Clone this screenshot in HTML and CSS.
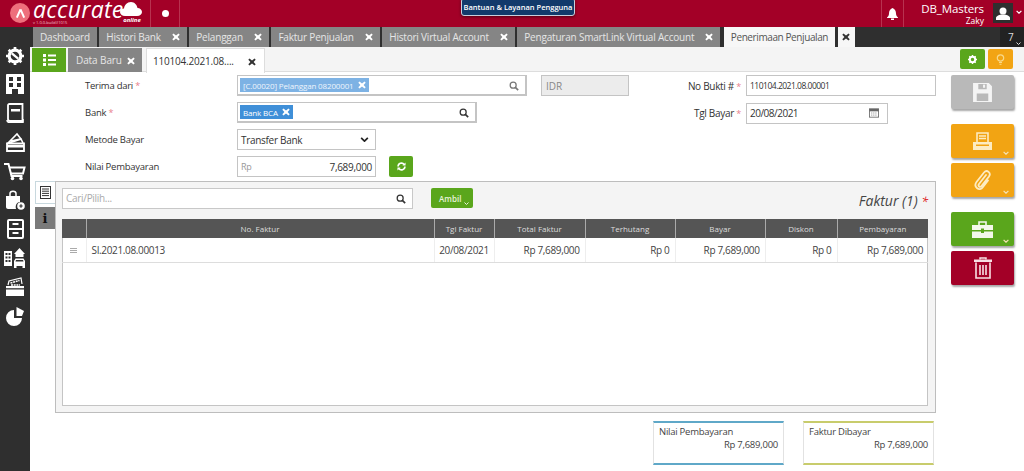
FILE: index.html
```html
<!DOCTYPE html>
<html lang="en">
<head>
    <meta charset="UTF-8">
    <meta name="viewport" content="width=device-width, initial-scale=1.0">
    <title>Penerimaan Penjualan</title>
    <link rel="stylesheet" href="styles.css">
</head>
<body>
    <svg class="sprites" width="0" height="0">
        <symbol id="i-close" viewBox="0 0 10 10"><path d="M1.800 0.600 5 3.200 8.200 0.600 9.600 2.200 7 5 9.600 7.800 8.200 9.400 5 6.800 1.800 9.400 0.400 7.800 3 5 0.400 2.200Z"/></symbol>
        <symbol id="i-search" viewBox="0 0 12 12"><circle cx="5" cy="5" r="3.600" fill="none" stroke="currentColor" stroke-width="1.500"/><path d="M7.600 7.600 11 11" stroke="currentColor" stroke-width="2"/></symbol>
        <symbol id="i-chev" viewBox="0 0 10 6"><path d="M1 1 5 5 9 1" fill="none" stroke="currentColor" stroke-width="2"/></symbol>
    </svg>

    <header class="topbar">
        <div class="brand">
            <span class="brand-badge">
                <svg width="11" height="11" viewBox="0 0 12 12"><path d="M6 1.500 2 10.500M6 1.500l4 9" fill="none" stroke="#fff" stroke-width="2.200"/></svg>
            </span>
            <div class="brand-text">
                <span class="brand-name">accurate</span>
                <span class="brand-version">v 1.0.0-build#1015</span>
            </div>
            <div class="brand-cloud">
                <svg width="22" height="14" viewBox="0 0 22 14"><path d="M5 14C2 14 0 12 0 10 0 8 1.500 6.500 4 6.500 4.500 3 7 0 11 0 14.500 0 17 3 17.500 6 20 6 22 8 22 10 22 12 20 14 17 14Z" fill="#fff"/></svg>
                <span class="brand-online">online</span>
            </div>
        </div>
        <div class="dot-cell"><span class="dot"></span></div>
        <div class="help-box">Bantuan &amp; Layanan Pengguna</div>
        <div class="bell-cell">
            <svg width="11" height="12" viewBox="0 0 11 12" fill="#fff"><path d="M5.500 0C3 1 2 3 2 5.500 2 7.500 1 8.500 0 9.500V10H11V9.500C10 8.500 9 7.500 9 5.500 9 3 8 1 5.500 0Z"/><rect x="4" y="10.500" width="3" height="1.500"/></svg>
        </div>
        <div class="user">
            <div class="user-name">DB_Masters</div>
            <div class="user-sub">Zaky</div>
        </div>
        <div class="avatar">
            <svg width="14" height="13" viewBox="0 0 14 13" fill="#fff"><circle cx="7" cy="4" r="3.500"/><path d="M0 13V11C0 9 3 8 5 7.500H9C11 8 14 9 14 11V13Z"/></svg>
        </div>
        <svg class="user-chev"><use href="#i-chev"/></svg>
    </header>

    <nav class="tabbar">
        <a class="tab">Dashboard</a>
        <a class="tab">Histori Bank <svg class="x"><use href="#i-close"/></svg></a>
        <a class="tab">Pelanggan <svg class="x"><use href="#i-close"/></svg></a>
        <a class="tab">Faktur Penjualan <svg class="x"><use href="#i-close"/></svg></a>
        <a class="tab">Histori Virtual Account <svg class="x"><use href="#i-close"/></svg></a>
        <a class="tab">Pengaturan SmartLink Virtual Account <svg class="x"><use href="#i-close"/></svg></a>
        <a class="tab tab-active">Penerimaan Penjualan</a>
        <a class="tab tab-closer"><svg class="x"><use href="#i-close"/></svg></a>
        <div class="tab-count">7 <svg class="count-chev"><use href="#i-chev"/></svg></div>
    </nav>

    <div class="workspace">
        <aside class="sidebar">
            <!-- gear with wrench -->
            <svg width="18" height="18" viewBox="0 0 20 20"><circle cx="10" cy="10" r="6.500" fill="none" stroke="#fff" stroke-width="3.500"/><path d="M10 0V4M10 16V20M0 10H4M16 10H20M3 3 5.500 5.500M14.500 14.500 17 17M17 3 14.500 5.500M5.500 14.500 3 17" stroke="#fff" stroke-width="3"/><path d="M6.500 7 13.500 13" stroke="#fff" stroke-width="2.500"/></svg>
            <!-- building -->
            <svg width="18" height="20" viewBox="0 0 18 20"><path fill-rule="evenodd" fill="#fff" d="M0 1C0 .5.500 0 1 0H17C17.500 0 18 .5 18 1V20H12V15H6V20H0ZM3 3V7H7V3ZM11 3V7H15V3ZM3 9V13H7V9ZM11 9V13H15V9Z"/></svg>
            <!-- book -->
            <svg width="18" height="20" viewBox="0 0 18 20"><path fill="none" stroke="#fff" stroke-width="1.800" d="M2 2.500C2 1.500 2.500 1 3.500 1H16.500V18H4C2.800 18 2 17.300 2 16Z"/><rect x="5" y="6" width="9" height="2.500" fill="#fff"/><path d="M1 17C1 19 2.500 19.500 4 19.500H17V16" fill="none" stroke="#fff" stroke-width="1.500"/></svg>
            <!-- wallet -->
            <svg width="19" height="20" viewBox="0 0 19 20"><path fill="none" stroke="#fff" stroke-width="1.600" d="M1 12 11 2 15 7 3 11M5 9 15 7 17 11"/><path fill="none" stroke="#fff" stroke-width="1.800" d="M1 11.500H18V19H1Z"/><rect x="1" y="13" width="17" height="2.500" fill="#fff"/></svg>
            <!-- cart -->
            <svg width="22" height="20" viewBox="0 0 22 20"><path fill="none" stroke="#fff" stroke-width="2" d="M0 3H4.500L7.500 15H18.500"/><path fill="none" stroke="#fff" stroke-width="2" d="M5.500 6.500H20.500L19 12.500H7"/><circle cx="8.500" cy="17.500" r="1.800" fill="#fff"/><circle cx="17" cy="17.500" r="1.800" fill="#fff"/></svg>
            <!-- bag with plus -->
            <svg width="20" height="20" viewBox="0 0 20 20"><path fill="none" stroke="#fff" stroke-width="1.500" d="M5 6V3.500C5 .5 11 .5 11 3.500V6"/><path fill="#fff" d="M1 6H15V12C12 12 10 15 11 19H3C2 19 1 18 1 17Z"/><circle cx="16" cy="16" r="3.800" fill="#fff"/><path d="M14.300 16H17.700M16 14.300V17.700" stroke="#2f2f2f" stroke-width="1.200"/></svg>
            <!-- drawers -->
            <svg width="17" height="20" viewBox="0 0 17 20"><rect x="1" y="1" width="15" height="18" rx="1" fill="none" stroke="#fff" stroke-width="2"/><path d="M1 10H16" stroke="#fff" stroke-width="2"/><path d="M5.500 5H11.500M5.500 14H11.500" stroke="#fff" stroke-width="2"/></svg>
            <!-- buildings and car -->
            <svg width="22" height="20" viewBox="0 0 22 20"><path fill="#fff" fill-rule="evenodd" d="M0 3H8V18H0ZM1.500 5V7H3.500V5ZM4.500 5V7H6.500V5ZM1.500 8.500V10.500H3.500V8.500ZM4.500 8.500V10.500H6.500V8.500ZM1.500 12V14H3.500V12ZM4.500 12V14H6.500V12Z"/><path fill="#fff" d="M10 6 15.500 0 21 6 19.500 6V9H11.500V6Z"/><path fill="#fff" fill-rule="evenodd" d="M10 13 11.500 10.500H19.500L21 13V20H18.500V18H12.500V20H10ZM12 12 11.500 13.500H19.500L19 12Z"/></svg>
            <!-- cash -->
            <svg width="20" height="20" viewBox="0 0 20 20"><path fill="none" stroke="#fff" stroke-width="1.200" d="M3 8 4 4 16 1 17 7"/><path d="M5.500 6 14.500 3.500M6 8H15" stroke="#fff" stroke-width="1.500" stroke-dasharray="2 .7"/><rect x="1" y="9" width="18" height="2.200" fill="#fff"/><rect x="1" y="12.500" width="18" height="6.500" fill="#fff"/></svg>
            <!-- pie -->
            <svg width="19" height="20" viewBox="0 0 19 20"><path fill="#fff" d="M8 4A8 8 0 1 0 16 12H8Z"/><path fill="#fff" d="M10.500 1 18 5 16 10 10.500 10Z"/></svg>
        </aside>

        <main class="main">
            <div class="subbar">
                <button class="list-btn">
                    <svg width="13" height="12" viewBox="0 0 13 12" fill="#fff"><path d="M0 0H3V3H0ZM5 .5H13V2.500H5ZM0 4.500H3V7.500H0ZM5 5H13V7H5ZM0 9H3V12H0ZM5 9.500H13V11.500H5Z"/></svg>
                </button>
                <a class="subtab">Data Baru <svg class="x"><use href="#i-close"/></svg></a>
                <a class="subtab subtab-active">110104.2021.08.... <svg class="x"><use href="#i-close"/></svg></a>
                <div class="subbar-tools">
                    <button class="tool-btn tool-green">
                        <svg width="9" height="9" viewBox="0 0 10 10"><circle cx="5" cy="5" r="3" fill="none" stroke="#fff" stroke-width="2.200"/><path d="M5 0V2M5 8V10M0 5H2M8 5H10M1.500 1.500 3 3M7 7 8.500 8.500M8.500 1.500 7 3M3 7 1.500 8.500" stroke="#fff" stroke-width="1.500"/></svg>
                    </button>
                    <button class="tool-btn tool-orange">
                        <svg width="9" height="11" viewBox="0 0 9 11"><circle cx="4.500" cy="4" r="3.200" fill="none" stroke="#f8d98a" stroke-width="1.200"/><path d="M3 8.500H6M3.500 10.300H5.500" stroke="#f8d98a"/></svg>
                    </button>
                </div>
            </div>

            <div class="content">
                <div class="sheet">
                    <div class="form">
                        <div class="form-left">
                            <div class="form-row">
                                <label class="label">Terima dari <i class="req">*</i></label>
                                <div class="field field-tags field-customer">
                                    <span class="tag tag-light">[C.00020] Pelanggan 08200001 <svg class="x tag-x-orange"><use href="#i-close"/></svg></span>
                                    <svg class="field-icon icon-faded"><use href="#i-search"/></svg>
                                </div>
                                <div class="field field-currency">IDR</div>
                            </div>
                            <div class="form-row">
                                <label class="label">Bank <i class="req">*</i></label>
                                <div class="field field-tags field-bank">
                                    <span class="tag">Bank BCA <svg class="x tag-x"><use href="#i-close"/></svg></span>
                                    <svg class="field-icon"><use href="#i-search"/></svg>
                                </div>
                            </div>
                            <div class="form-row">
                                <label class="label">Metode Bayar</label>
                                <div class="field field-small">Transfer Bank <svg class="select-chev"><use href="#i-chev"/></svg></div>
                            </div>
                            <div class="form-row">
                                <label class="label">Nilai Pembayaran</label>
                                <div class="field field-small field-money"><span class="rp">Rp</span><span>7,689,000</span></div>
                                <button class="refresh-btn">
                                    <svg width="9" height="9" viewBox="0 0 10 10"><path d="M1.200 5A3.800 3.800 0 0 1 8 2.700M8.800 5A3.800 3.800 0 0 1 2 7.300" fill="none" stroke="#fff" stroke-width="1.800"/><path d="M9.500 .5V4H6ZM.5 9.500V6H4Z" fill="#fff"/></svg>
                                </button>
                            </div>
                        </div>
                        <div class="form-right">
                            <div class="form-row">
                                <label class="label-right">No Bukti # <i class="req">*</i></label>
                                <div class="field field-nobukti">110104.2021.08.00001 <svg class="x field-x"><use href="#i-close"/></svg></div>
                            </div>
                            <div class="form-row">
                                <label class="label-right">Tgl Bayar <i class="req">*</i></label>
                                <div class="field field-date">20/08/2021
                                    <svg class="date-icon" viewBox="0 0 12 12"><rect x=".5" y="1" width="11" height="10" fill="none" stroke="#666"/><rect x=".5" y="1" width="11" height="3" fill="#666"/><path d="M2.500 6H9.500M2.500 8.500H9.500" stroke="#888" stroke-dasharray="1.500 1"/></svg>
                                </div>
                            </div>
                        </div>
                    </div>

                    <section class="panel">
                        <div class="side-tabs">
                            <div class="side-tab side-tab-active">
                                <svg width="11" height="13" viewBox="0 0 11 13"><rect x=".5" y=".5" width="10" height="12" fill="none" stroke="#333"/><path d="M2 3H9M2 5.200H9M2 7.400H9M2 9.600H9" stroke="#333"/></svg>
                            </div>
                            <div class="side-tab side-tab-info">i</div>
                        </div>
                        <div class="panel-body">
                            <div class="toolbar">
                                <div class="search">Cari/Pilih... <svg class="field-icon"><use href="#i-search"/></svg></div>
                                <button class="ambil-btn">Ambil <svg class="ambil-chev"><use href="#i-chev"/></svg></button>
                                <div class="panel-title">Faktur (1) <i class="req-big">*</i></div>
                            </div>
                            <div class="table-wrap">
                                <table class="grid">
                                    <colgroup>
                                        <col class="c-handle"><col class="c-no"><col class="c-tgl"><col class="c-total"><col class="c-hutang"><col class="c-bayar"><col class="c-diskon"><col class="c-pay">
                                    </colgroup>
                                    <thead>
                                        <tr><th></th><th>No. Faktur</th><th>Tgl Faktur</th><th>Total Faktur</th><th>Terhutang</th><th>Bayar</th><th>Diskon</th><th>Pembayaran</th></tr>
                                    </thead>
                                    <tbody>
                                        <tr>
                                            <td class="handle"><span class="handle-bars"></span></td>
                                            <td>SI.2021.08.00013</td>
                                            <td class="center">20/08/2021</td>
                                            <td class="num">Rp 7,689,000</td>
                                            <td class="num">Rp 0</td>
                                            <td class="num">Rp 7,689,000</td>
                                            <td class="num">Rp 0</td>
                                            <td class="num">Rp 7,689,000</td>
                                        </tr>
                                    </tbody>
                                </table>
                            </div>
                        </div>
                    </section>

                    <div class="summary">
                        <div class="sum-box sum-blue">
                            <div>Nilai Pembayaran</div>
                            <div class="sum-value">Rp 7,689,000</div>
                        </div>
                        <div class="sum-box sum-yellow">
                            <div>Faktur Dibayar</div>
                            <div class="sum-value">Rp 7,689,000</div>
                        </div>
                    </div>
                </div>

                <div class="actions">
                    <button class="act act-grey">
                        <svg width="21" height="21" viewBox="0 0 20 20"><path fill="#f4f4f4" fill-rule="evenodd" d="M1 1H16L19 4V19H1ZM6 1.800V7H14V1.800ZM4.500 11V18H15.500V11Z"/><rect x="6" y="12.500" width="8" height="4.500" fill="#b9b9b9"/><rect x="10.500" y="2.500" width="2" height="3" fill="#f4f4f4"/></svg>
                    </button>
                    <button class="act act-orange act-gap">
                        <svg width="21" height="19" viewBox="0 0 21 19"><path fill="none" stroke="#fdecc2" stroke-width="1.600" d="M5 1H16V11H5Z"/><path d="M7 4H14M7 6.500H14" stroke="#fdecc2" stroke-width="1.300"/><path fill="#fdecc2" fill-rule="evenodd" d="M1 10H20V18H1ZM4 12.500V14H17V12.500Z"/></svg>
                        <svg class="act-chev"><use href="#i-chev"/></svg>
                    </button>
                    <button class="act act-orange">
                        <svg width="20" height="22" viewBox="0 0 20 22"><path fill="none" stroke="#fdecc2" stroke-width="1.800" stroke-linecap="round" d="M13 6 6 15C4.500 17 7 19 8.500 17L16 7.500C18.500 4 14 0 11 3.500L3.500 13C0 18 6.500 23 10 18L15 11.500"/></svg>
                        <svg class="act-chev"><use href="#i-chev"/></svg>
                    </button>
                    <button class="act act-green act-gap">
                        <svg width="21" height="17" viewBox="0 0 21 17"><path fill="none" stroke="#f3f8ea" stroke-width="1.600" d="M7 4V1H14V4"/><path fill="#f3f8ea" d="M0 4H21V9H12V7.500H9V9H0ZM0 10.500H9V12H12V10.500H21V17H0Z"/></svg>
                        <svg class="act-chev"><use href="#i-chev"/></svg>
                    </button>
                    <button class="act act-red">
                        <svg width="18" height="22" viewBox="0 0 18 22"><path fill="none" stroke="#f8dfe4" stroke-width="1.500" d="M6 2.500V1H12V2.500"/><path fill="#f8dfe4" d="M0 2.500H18V5H0Z"/><path fill="none" stroke="#f8dfe4" stroke-width="1.600" d="M2 5.500V21H16V5.500M6 8V18M9 8V18M12 8V18"/></svg>
                    </button>
                </div>
            </div>
        </main>
    </div>
</body>
</html>
```

FILE: styles.css
```css
* {
    box-sizing: border-box;
}

html, body {
    margin: 0;
    height: 100%;
}

body {
    font-family: "Open Sans", "Noto Sans", sans-serif;
    font-size: 10px;
    color: #333;
    background: #fff;
    overflow: hidden;
    display: flex;
    flex-direction: column;
}

button {
    font-family: inherit;
    border: none;
    padding: 0;
}

.sprites {
    position: absolute;
}

svg.x {
    width: 8px;
    height: 8px;
    fill: #fff;
    flex: none;
}

/* Top bar */
.topbar {
    height: 27px;
    flex: none;
    background: #a30027;
    display: flex;
    align-items: stretch;
    color: #fff;
}

.brand {
    width: 151px;
    border-right: 1px solid #b8324f;
    display: flex;
    align-items: flex-start;
    padding: 3px 0 0 10px;
}

.brand-badge {
    width: 20px;
    height: 20px;
    border-radius: 50%;
    background: #ee6f7c;
    display: flex;
    align-items: center;
    justify-content: center;
}

.brand-text {
    margin: -3px 0 0 3px;
    width: 87px;
}

.brand-name {
    font-style: italic;
    font-size: 23px;
    line-height: 19px;
    letter-spacing: 0.3px;
    display: block;
}

.brand-version {
    display: block;
    margin-top: 1px;
    font-size: 4px;
    line-height: 5px;
    white-space: nowrap;
    color: #f3c5cf;
}

.brand-cloud {
    width: 24px;
    margin-top: -1px;
    text-align: center;
}

.brand-cloud svg {
    display: block;
}

.brand-online {
    display: block;
    font-size: 6px;
    line-height: 8px;
    font-style: italic;
    font-weight: 700;
}

.dot-cell {
    width: 29px;
    border-right: 1px solid #b8324f;
    display: flex;
    align-items: center;
    justify-content: center;
}

.dot {
    width: 7px;
    height: 7px;
    border-radius: 50%;
    background: #fff;
}

.help-box {
    margin-left: 281px;
    margin-top: -2px;
    width: 114px;
    height: 18px;
    background: #123a6b;
    border: 1px solid #c9cfdc;
    border-radius: 3px;
    box-shadow: 0 1px 3px rgba(0, 0, 0, 0.5);
    font-size: 7.500px;
    font-weight: 600;
    line-height: 16px;
    text-align: center;
    white-space: nowrap;
}

.bell-cell {
    margin-left: 306px;
    width: 23px;
    border-left: 1px solid #b8324f;
    border-right: 1px solid #b8324f;
    display: flex;
    align-items: center;
    justify-content: center;
}

.user {
    width: 80px;
    text-align: right;
    padding-top: 2px;
}

.user-name {
    font-size: 11.500px;
    line-height: 14px;
    letter-spacing: -0.1px;
}

.user-sub {
    font-size: 8.500px;
    line-height: 10px;
}

.avatar {
    margin: 3px 0 0 9px;
    width: 20px;
    height: 20px;
    background: #2f2f2f;
    display: flex;
    align-items: center;
    justify-content: center;
}

.user-chev {
    width: 6px;
    height: 4px;
    margin: 10px 0 0 3px;
}

/* Open page tabs */
.tabbar {
    height: 20px;
    flex: none;
    background: #2f2f2f;
    display: flex;
    padding-left: 33px;
    gap: 2.500px;
}

.tab {
    background: #858585;
    color: #e6e6e6;
    font-size: 10px;
    letter-spacing: -0.2px;
    line-height: 20px;
    padding: 0 7px;
    display: flex;
    align-items: center;
    gap: 11px;
    white-space: nowrap;
}

.tab-active {
    margin-left: 1px;
    background: #f7f7f7;
    color: #555;
    letter-spacing: -0.4px;
}

.tab-closer {
    padding: 0 4.500px;
    background: #f7f7f7;
}

.tab-closer svg.x {
    fill: #333;
}

.tab-count {
    margin-left: auto;
    width: 24px;
    background: #222;
    color: #ddd;
    padding-left: 8px;
    font-size: 10px;
    line-height: 20px;
    position: relative;
}

.count-chev {
    position: absolute;
    right: 3px;
    bottom: 2px;
    width: 5px;
    height: 3px;
}

/* Left menu */
.workspace {
    flex: 1;
    display: flex;
    min-height: 0;
}

.sidebar {
    width: 30px;
    flex: none;
    background: #2f2f2f;
    display: flex;
    flex-direction: column;
    align-items: center;
    gap: 9px;
}

.main {
    flex: 1;
    min-width: 0;
    display: flex;
    flex-direction: column;
}

/* Document tabs */
.subbar {
    height: 25px;
    flex: none;
    background: #f4f4f4;
    border-bottom: 1px solid #ddd;
    display: flex;
    align-items: stretch;
    padding-left: 2px;
}

.list-btn {
    width: 34px;
    height: 24px;
    margin-top: 1px;
    background: #5aa61c;
    display: flex;
    align-items: center;
    justify-content: center;
}

.subtab {
    margin: 1px 0 0 2px;
    width: 74px;
    height: 24px;
    background: #858585;
    color: #e6e6e6;
    font-size: 10px;
    letter-spacing: -0.1px;
    display: flex;
    align-items: center;
    padding-left: 8px;
    gap: 5px;
    white-space: nowrap;
}

.subtab svg.x {
    margin-top: 1px;
}

.subtab-active {
    margin-left: 4px;
    width: 119px;
    height: 25px;
    background: #fff;
    color: #333;
    border: 1px solid #ddd;
    border-bottom: none;
    padding-left: 6px;
    gap: 14px;
    letter-spacing: -0.2px;
}

.subtab-active svg.x {
    fill: #333;
}

.subbar-tools {
    margin-left: auto;
    padding: 2px 11px 0 0;
    display: flex;
    gap: 3px;
}

.tool-btn {
    width: 25px;
    height: 20px;
    border-radius: 2px;
    display: flex;
    align-items: center;
    justify-content: center;
}

.tool-green {
    background: #5aa61c;
}

.tool-orange {
    background: #f2a413;
}

/* Form */
.content {
    flex: 1;
    display: flex;
    min-height: 0;
}

.sheet {
    width: 906px;
    flex: none;
}

.form {
    display: flex;
    justify-content: space-between;
    padding: 3px 0 0 55px;
}

.form-left, .form-right {
    display: flex;
    flex-direction: column;
    gap: 6px;
}

.form-right {
    gap: 6.500px;
}

.form-row {
    display: flex;
    align-items: center;
    height: 21px;
}

.label {
    width: 152px;
    flex: none;
    font-size: 9.500px;
    letter-spacing: -0.25px;
}

.label-right {
    width: 100px;
    flex: none;
    text-align: right;
    padding-right: 5px;
    font-size: 10px;
    letter-spacing: -0.3px;
}

.req {
    color: #e8808a;
    font-style: normal;
    font-size: 9px;
}

.field {
    height: 21px;
    background: #fff;
    border: 1px solid #c4c4c4;
    display: flex;
    align-items: center;
    padding: 0 3px;
    position: relative;
    font-size: 10px;
    letter-spacing: -0.3px;
    color: #333;
}

.field-tags {
    border-width: 1px 2px 2px 1px;
    padding-left: 2px;
}

.field-customer {
    width: 290px;
}

.field-bank {
    width: 240px;
}

.field-currency {
    width: 88px;
    margin-left: 14px;
    background: #ececec;
    color: #888;
    padding-left: 4px;
    letter-spacing: 0;
}

.field-small {
    width: 139px;
    justify-content: space-between;
}

.field-money {
    padding-right: 3px;
}

.rp {
    color: #999;
    font-size: 9px;
}

.field-nobukti {
    width: 190px;
    font-size: 8.500px;
    letter-spacing: -0.5px;
    padding-left: 3px;
}

.field-date {
    width: 142px;
    letter-spacing: -0.5px;
}

.field-x {
    position: absolute;
    right: 6px;
    top: 6px;
    width: 7px;
    height: 7px;
    fill: #333;
}

.date-icon {
    position: absolute;
    right: 8px;
    top: 4px;
    width: 10px;
    height: 10px;
}

.select-chev {
    width: 9px;
    height: 5px;
    margin-right: 3px;
    color: #222;
}

.tag {
    background: #3f8fd8;
    color: #fff;
    font-size: 8px;
    letter-spacing: -0.15px;
    height: 14px;
    padding: 0 3px;
    display: inline-flex;
    align-items: center;
    gap: 4px;
    white-space: nowrap;
}

.tag-light {
    background: #7db2e4;
    color: #eef5fc;
}

.tag-x-orange {
    fill: #f2c06a;
}

.field-icon {
    position: absolute;
    right: 6px;
    top: 5px;
    width: 10px;
    height: 10px;
    color: #333;
}

.icon-faded {
    color: #777;
}

.refresh-btn {
    margin-left: 13px;
    width: 24px;
    height: 21px;
    background: #5aa61c;
    border-radius: 2px;
    display: flex;
    align-items: center;
    justify-content: center;
}

/* Invoice panel */
.panel {
    margin: 4px 0 0 5px;
    height: 232px;
    display: flex;
}

.side-tabs {
    width: 20px;
    flex: none;
}

.side-tab {
    display: flex;
    align-items: center;
    justify-content: center;
}

.side-tab-active {
    height: 23px;
    border: 1px solid #c8d8de;
    border-right: none;
    background: #fff;
}

.side-tab-info {
    height: 22px;
    margin-top: 3px;
    background: #7a7a7a;
    color: #111;
    font-family: "DejaVu Serif", serif;
    font-weight: 700;
    font-size: 13px;
}

.panel-body {
    flex: 1;
    min-width: 0;
    background: #f4f4f4;
    border: 1px solid #bdbdbd;
    padding: 6px 7px 6px 6px;
}

.toolbar {
    height: 31px;
    display: flex;
    align-items: flex-start;
}

.search {
    width: 351px;
    height: 21px;
    background: #fff;
    border: 1px solid #c8c8c8;
    color: #aaa;
    font-size: 10px;
    letter-spacing: -0.3px;
    line-height: 19px;
    padding-left: 3px;
    position: relative;
}

.ambil-btn {
    margin-left: 18px;
    width: 42px;
    height: 20px;
    background: #5aa61c;
    color: #e8f3dc;
    border-radius: 2px;
    font-size: 8px;
    font-weight: 600;
    text-align: left;
    padding-left: 8px;
    position: relative;
}

.ambil-chev {
    position: absolute;
    right: 4px;
    bottom: 3px;
    width: 5px;
    height: 3px;
}

.panel-title {
    margin-left: auto;
    padding: 3px 0 0;
    font-size: 14px;
    font-style: italic;
    color: #444;
}

.req-big {
    color: #d22;
    font-size: 12px;
}

.table-wrap {
    height: 187px;
    background: #fff;
    border: 1px solid #c4c4c4;
    border-top: none;
}

.grid {
    width: 866px;
    margin-left: -1px;
    border-collapse: collapse;
    table-layout: fixed;
}

.c-handle { width: 24px; }
.c-no { width: 348px; }
.c-tgl { width: 60px; }
.c-total { width: 91px; }
.c-hutang { width: 90px; }
.c-bayar { width: 90px; }
.c-diskon { width: 72px; }
.c-pay { width: 91px; }

.grid th {
    height: 19px;
    background: #555;
    color: #ddd;
    font-size: 8px;
    font-weight: 400;
    padding: 0;
    border-left: 1px solid #aaa;
}

.grid th:first-child {
    border-left: none;
}

.grid td {
    height: 24px;
    font-size: 10px;
    letter-spacing: -0.35px;
    padding: 0 5px;
    color: #444;
    border-left: 1px solid #eee;
    border-bottom: 1px solid #ddd;
    white-space: nowrap;
}

.grid td:first-child {
    border-left: none;
}

.grid .center {
    text-align: center;
    padding: 0;
}

.grid .num {
    text-align: right;
}

.grid .handle {
    padding: 0;
    text-align: center;
}

.handle-bars {
    display: inline-block;
    width: 7px;
    height: 5px;
    border-top: 1px solid #aaa;
    border-bottom: 1px solid #aaa;
    position: relative;
    top: -1px;
    background: linear-gradient(#aaa, #aaa) center / 100% 1px no-repeat;
}

/* Totals */
.summary {
    margin-top: 8px;
    padding-right: 2px;
    display: flex;
    justify-content: flex-end;
    gap: 19px;
}

.sum-box {
    width: 131px;
    height: 44px;
    border: 1px solid #e2e2e2;
    border-top-width: 2px;
    border-bottom-width: 2px;
    padding: 2px 5px;
    font-size: 9.500px;
    letter-spacing: -0.25px;
    line-height: 13px;
    color: #444;
}

.sum-blue {
    border-top-color: #5fa8c8;
    border-bottom-color: #5fa8c8;
}

.sum-yellow {
    border-top-color: #c8cc6c;
    border-bottom-color: #c8cc6c;
}

.sum-value {
    text-align: right;
}

/* Action buttons */
.actions {
    padding: 3px 0 0 15px;
    display: flex;
    flex-direction: column;
    gap: 5px;
}

.act {
    width: 63px;
    height: 34px;
    border-radius: 2px;
    box-shadow: 1px 2px 2px rgba(0, 0, 0, 0.35);
    display: flex;
    align-items: center;
    justify-content: center;
    position: relative;
}

.act-gap {
    margin-top: 10px;
}

.act-grey { background: #b9b9b9; }
.act-orange { background: #f2a413; }
.act-green { background: #5aa61c; }
.act-red { background: #a30027; }

.act-chev {
    position: absolute;
    right: 5px;
    bottom: 3px;
    width: 6px;
    height: 4px;
    color: #f5e3b5;
}
```
